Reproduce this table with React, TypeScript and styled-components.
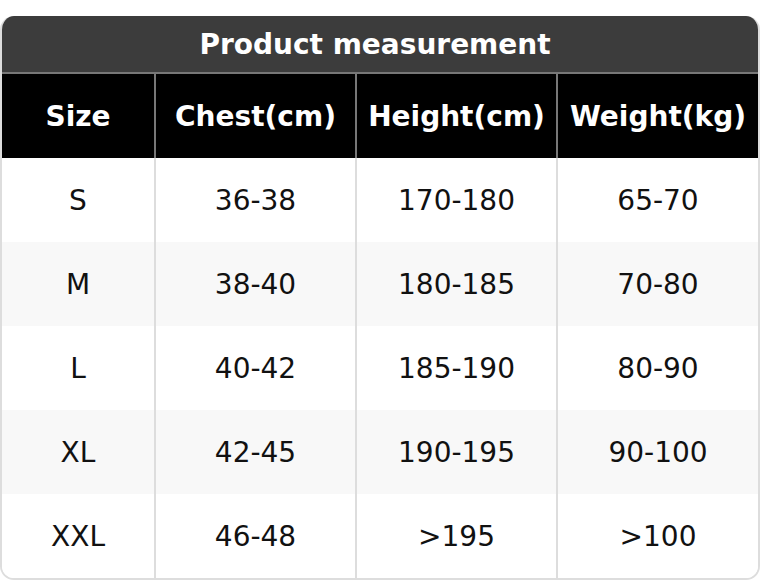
import styled, { createGlobalStyle } from "styled-components";

const GlobalStyle = createGlobalStyle`
  html, body {
    margin: 0;
    padding: 0;
    background: #ffffff;
  }
  body {
    font-family: "DejaVu Sans", "Liberation Sans", sans-serif;
  }
`;

const Card = styled.div`
  width: 760px;
  margin-top: 16px;
  box-sizing: border-box;
  border: 2px solid #dddddd;
  border-top: none;
  border-radius: 14px;
  overflow: hidden;
`;

const Title = styled.div`
  height: 56px;
  display: flex;
  align-items: center;
  justify-content: center;
  padding-right: 10px;
  background-color: #3c3c3c;
  border-bottom: 2px solid #777777;
  color: #ffffff;
  font-size: 28px;
  font-weight: 700;
  margin: 0 -2px;
`;

const Table = styled.table`
  width: 100%;
  border-collapse: collapse;
  table-layout: fixed;
`;

const HeadCell = styled.th`
  height: 84px;
  padding: 0;
  background-color: #000000;
  color: #ffffff;
  font-size: 28px;
  font-weight: 700;
  text-align: center;
  white-space: nowrap;
  border-left: 2px solid #777777;
  &:first-child {
    border-left: none;
  }
`;

const Row = styled.tr<{ $shaded: boolean }>`
  background-color: ${(props) => (props.$shaded ? "#f8f8f8" : "#ffffff")};
`;

const Cell = styled.td`
  height: 84px;
  padding: 0;
  color: #111111;
  font-size: 28px;
  text-align: center;
  border-left: 2px solid #dddddd;
  &:first-child {
    border-left: none;
  }
`;

const columns = ["Size", "Chest(cm)", "Height(cm)", "Weight(kg)"];
const widths = [153, 201, 201, 201];

const rows = [
  ["S", "36-38", "170-180", "65-70"],
  ["M", "38-40", "180-185", "70-80"],
  ["L", "40-42", "185-190", "80-90"],
  ["XL", "42-45", "190-195", "90-100"],
  ["XXL", "46-48", ">195", ">100"],
];

function App() {
  return (
    <>
      <GlobalStyle />
      <Card>
        <Title>Product measurement</Title>
        <Table>
          <colgroup>
            {widths.map((w, i) => (
              <col key={i} style={{ width: w }} />
            ))}
          </colgroup>
          <thead>
            <tr>
              {columns.map((c) => (
                <HeadCell key={c}>{c}</HeadCell>
              ))}
            </tr>
          </thead>
          <tbody>
            {rows.map((row, i) => (
              <Row key={row[0]} $shaded={i % 2 === 1}>
                {row.map((v, j) => (
                  <Cell key={j}>{v}</Cell>
                ))}
              </Row>
            ))}
          </tbody>
        </Table>
      </Card>
    </>
  );
}

export default App;
